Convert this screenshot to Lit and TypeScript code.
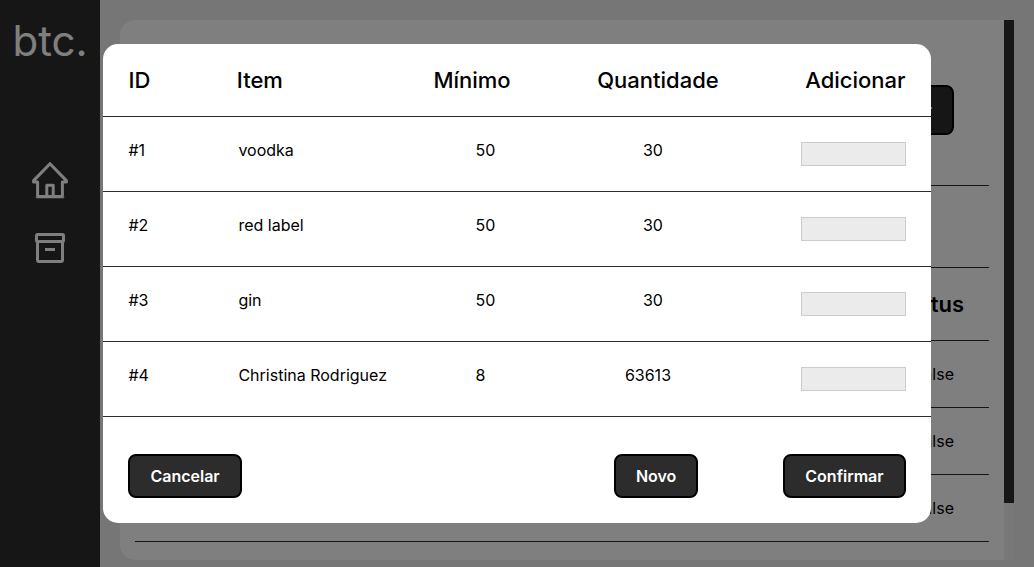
import { LitElement, html, css } from "lit";
import { customElement, state } from "lit/decorators.js";

interface StockItem {
  id: number;
  name: string;
  minimum: number;
  quantity: number;
}

const ITEMS: StockItem[] = [
  { id: 1, name: "voodka", minimum: 50, quantity: 30 },
  { id: 2, name: "red label", minimum: 50, quantity: 30 },
  { id: 3, name: "gin", minimum: 50, quantity: 30 },
  { id: 4, name: "Christina Rodriguez", minimum: 8, quantity: 63613 },
];

@customElement("side-nav")
class SideNav extends LitElement {
  static styles = css`
    :host {
      display: flex;
      flex-direction: column;
      align-items: center;
      flex: none;
      width: 100px;
      background: #2c2c2c;
      color: #fff;
    }
    .logo {
      margin: 16px 0 94px;
      font-size: 42px;
      line-height: 50px;
      font-weight: 400;
    }
    .links {
      display: flex;
      flex-direction: column;
      gap: 28px;
    }
    .link {
      display: block;
      height: 40px;
      color: inherit;
    }
    .icon {
      display: block;
      width: 40px;
      height: 40px;
      fill: none;
      stroke: currentColor;
      stroke-width: 3;
      stroke-linejoin: round;
    }
  `;

  render() {
    return html`
      <div class="logo">btc.</div>
      <nav class="links">
        <a class="link" href="#inicio" aria-label="Início">
          <svg class="icon" viewBox="0 0 40 40" aria-hidden="true">
            <path d="M20 3.700 3.600 20.600V22H7.600V36.500H32.400V22H36.400V20.600Z" />
            <path d="M16.800 36V25.200H23.200V36" />
            <path d="M6.100 36.500V38H33.900V36.500" stroke-width="0.500" />
          </svg>
        </a>
        <a class="link" href="#estoque" aria-label="Estoque">
          <svg class="icon" viewBox="0 0 40 40" aria-hidden="true">
            <rect x="6.500" y="6.500" width="27" height="7" rx="1" />
            <path d="M7.500 13.500V32a1.500 1.500 0 0 0 1.500 1.500H31a1.500 1.500 0 0 0 1.500-1.500V13.500" />
            <path d="M15 21.500H25" />
          </svg>
        </a>
      </nav>
    `;
  }
}

@customElement("stock-page")
class StockPage extends LitElement {
  static styles = css`
    :host {
      display: flex;
      flex: 1;
      min-width: 0;
      box-sizing: border-box;
      padding: 20px 20px 7px;
    }
    .card {
      flex: 1;
      min-width: 0;
      box-sizing: border-box;
      padding: 0 15px;
      overflow: hidden;
      background: #fff;
      border-radius: 15px 0 0 15px;
    }
    .toolbar {
      display: flex;
      justify-content: flex-end;
      padding: 65px 35px 50px;
      border-bottom: 1px solid #2c2c2c;
    }
    .action {
      height: 50px;
      padding: 0 20px;
      font: inherit;
      font-weight: 600;
      color: #fff;
      background: #2c2c2c;
      border: 2px solid #000;
      border-radius: 8px;
    }
    .filters {
      height: 81px;
      border-bottom: 1px solid #2c2c2c;
    }
    .table {
      width: 100%;
      border-collapse: collapse;
    }
    .head,
    .cell {
      padding: 0;
      border-bottom: 1px solid #2c2c2c;
      text-align: right;
    }
    .head {
      height: 72px;
      padding-right: 25px;
      font-size: 22px;
      font-weight: 600;
    }
    .cell {
      height: 66px;
      padding-right: 35px;
    }
    .track {
      flex: none;
      width: 10px;
      background: #f1f1f1;
    }
    .thumb {
      height: 89.4%;
      background: #2c2c2c;
    }
  `;

  render() {
    return html`
      <section class="card">
        <div class="toolbar"><button class="action" type="button">Adicionar</button></div>
        <div class="filters"></div>
        <table class="table">
          <thead>
            <tr><th class="head">Status</th></tr>
          </thead>
          <tbody>
            ${["False", "False", "False"].map((s) => html`<tr><td class="cell">${s}</td></tr>`)}
          </tbody>
        </table>
      </section>
      <div class="track"><div class="thumb"></div></div>
    `;
  }
}

@customElement("restock-dialog")
class RestockDialog extends LitElement {
  static styles = css`
    :host {
      position: fixed;
      inset: 0;
      display: flex;
      align-items: center;
      justify-content: center;
      background: rgba(0, 0, 0, 0.5);
    }
    .dialog {
      width: 80%;
      background: #fff;
      border-radius: 15px;
    }
    .table,
    .group {
      display: block;
    }
    .row {
      display: flex;
      align-items: flex-start;
      padding: 25px;
      border-bottom: 1px solid #2c2c2c;
    }
    .row.titles {
      justify-content: space-between;
    }
    .title {
      padding: 0;
      font-size: 22px;
      line-height: 22px;
      font-weight: 500;
    }
    .title.item {
      padding-right: 64px;
    }
    .cell {
      padding: 0;
      line-height: 16px;
      white-space: nowrap;
    }
    .cell.id {
      flex: 0 0 110px;
    }
    .cell.item {
      flex: 0 0 237px;
    }
    .cell.minimum {
      margin-right: auto;
      padding-right: 10px;
    }
    .cell.quantity {
      margin-right: auto;
    }
    .amount {
      display: block;
      box-sizing: border-box;
      width: 105px;
      height: 24px;
      padding: 0 4px;
      font: inherit;
      background: #ebebeb;
      border: 1px solid #ccc;
      border-radius: 0;
      outline: none;
    }
    .actions {
      display: flex;
      justify-content: space-between;
      padding: 37px 25px 25px;
    }
    .right {
      display: flex;
      gap: 85px;
    }
    .button {
      height: 44px;
      padding: 0 20px;
      font: inherit;
      font-weight: 600;
      color: #fff;
      background: #2c2c2c;
      border: 2px solid #000;
      border-radius: 8px;
    }
  `;

  @state() private items = ITEMS;

  render() {
    return html`
      <form class="dialog" role="dialog" aria-label="Adicionar ao estoque">
        <table class="table">
          <thead class="group">
            <tr class="row titles">
              <th class="title">ID</th>
              <th class="title item">Item</th>
              <th class="title">Mínimo</th>
              <th class="title">Quantidade</th>
              <th class="title">Adicionar</th>
            </tr>
          </thead>
          <tbody class="group">
            ${this.items.map(
              (item) => html`
                <tr class="row">
                  <td class="cell id">#${item.id}</td>
                  <td class="cell item">${item.name}</td>
                  <td class="cell minimum">${item.minimum}</td>
                  <td class="cell quantity">${item.quantity}</td>
                  <td class="cell">
                    <input class="amount" type="text" inputmode="numeric" aria-label="Adicionar ${item.name}" />
                  </td>
                </tr>
              `
            )}
          </tbody>
        </table>
        <div class="actions">
          <button class="button" type="button">Cancelar</button>
          <div class="right">
            <button class="button" type="button">Novo</button>
            <button class="button" type="button">Confirmar</button>
          </div>
        </div>
      </form>
    `;
  }
}

@customElement("app-root")
class AppRoot extends LitElement {
  static styles = css`
    :host {
      display: flex;
      height: 100vh;
      background: #ececec;
      color: #000;
      font-family: Inter, "Liberation Sans", sans-serif;
      font-size: 16px;
    }
  `;

  render() {
    return html`
      <side-nav></side-nav>
      <stock-page></stock-page>
      <restock-dialog></restock-dialog>
    `;
  }
}
